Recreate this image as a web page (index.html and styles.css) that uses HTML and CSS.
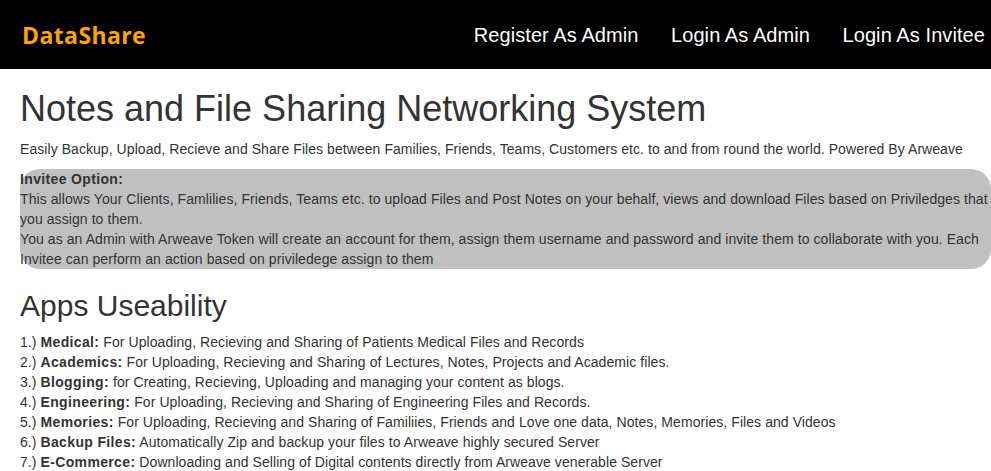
FILE: index.html
```html
<!DOCTYPE html>
<html lang="en">
<head>
    <meta charset="UTF-8">
    <meta name="viewport" content="width=device-width, initial-scale=1.0">
    <title>DataShare</title>
    <link rel="stylesheet" href="styles.css">
</head>
<body>
    <nav class="navbar">
        <a href="#" class="brand">DataShare</a>
        <div class="nav-links">
            <a href="#">Register As Admin</a>
            <a href="#">Login As Admin</a>
            <a href="#">Login As Invitee</a>
        </div>
    </nav>
    <div class="container">
        <h1>Notes and File Sharing Networking System</h1>
        <p class="lead">Easily Backup, Upload, Recieve and Share Files between Families, Friends, Teams, Customers etc. to and from round the world. Powered By Arweave</p>
        <div class="invitee">
            <b>Invitee Option:</b><br>
            This allows Your Clients, Famlilies, Friends, Teams etc. to upload Files and Post Notes on your behalf, views and download Files based on Priviledges that you assign to them.<br>
            You as an Admin with Arweave Token will create an account for them, assign them username and password and invite them to collaborate with you. Each Invitee can perform an action based on priviledege assign to them
        </div>
        <h2>Apps Useability</h2>
        <div class="uses">
            1.) <b>Medical:</b> For Uploading, Recieving and Sharing of Patients Medical Files and Records<br>
            2.) <b>Academics:</b> For Uploading, Recieving and Sharing of Lectures, Notes, Projects and Academic files.<br>
            3.) <b>Blogging:</b> for Creating, Recieving, Uploading and managing your content as blogs.<br>
            4.) <b>Engineering:</b> For Uploading, Recieving and Sharing of Engineering Files and Records.<br>
            5.) <b>Memories:</b> For Uploading, Recieving and Sharing of Familiies, Friends and Love one data, Notes, Memories, Files and Videos<br>
            6.) <b>Backup Files:</b> Automatically Zip and backup your files to Arweave highly secured Server<br>
            7.) <b>E-Commerce:</b> Downloading and Selling of Digital contents directly from Arweave venerable Server
        </div>
    </div>
</body>
</html>
```

FILE: styles.css
```css
* { box-sizing: border-box; }
html, body { height: 100%; }
body { margin: 0; font-family: "Liberation Sans", Arial, sans-serif; font-size: 14px; line-height: 20px; color: #333; background: #fff; overflow: hidden; }
a { text-decoration: none; }
b { letter-spacing: 0.35px; }
.navbar { height: 69px; background: #000; display: flex; justify-content: space-between; align-items: center; padding: 0 6px 0 22px; }
.brand { font-family: "Open Sans", sans-serif; font-size: 23px; font-weight: bold; letter-spacing: 0.4px; color: #ffa500; }
.nav-links { display: flex; gap: 32.5px; }
.nav-links a { font-size: 20px; letter-spacing: 0.08px; color: #fff; }
.container { padding: 0 0 0 20px; }
h1 { margin: 20px 0 10px; font-size: 36px; font-weight: 500; line-height: 40px; }
.lead { margin: 0 0 10px; letter-spacing: 0.06px; }
.invitee { background: #c0c0c0; border-radius: 20px; width: 971px; height: 100px; letter-spacing: 0.075px; }
h2 { margin: 20px 0 10px; font-size: 30px; font-weight: 500; line-height: 33px; }
.uses { letter-spacing: 0.07px; }
```
